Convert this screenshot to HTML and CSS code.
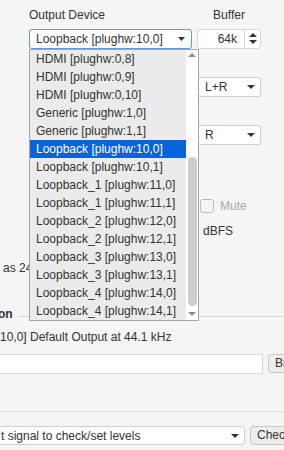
FILE: index.html
```html
<!DOCTYPE html>
<html lang="en">
<head>
  <meta charset="UTF-8">
  <meta name="viewport" content="width=device-width, initial-scale=1.0">
  <title>Output Device</title>
  <link rel="stylesheet" href="styles.css">
</head>
<body>
  <div class="top">
    <div class="field device">
      <label>Output Device</label>
      <div class="select focus">
        <span>Loopback [plughw:10,0]</span>
        <svg class="caret" width="7" height="4" viewBox="0 0 7 4"><path d="M0 0H7L3.5 4Z"/></svg>
      </div>
    </div>
    <div class="field buffer">
      <label>Buffer</label>
      <div class="spin">
        <span class="value">64k</span>
        <span class="arrows">
          <svg width="8" height="4" viewBox="0 0 8 4"><path d="M0 4H8L4 0Z"/></svg>
          <svg width="8" height="4" viewBox="0 0 8 4"><path d="M0 0H8L4 4Z"/></svg>
        </span>
      </div>
    </div>
  </div>

  <div class="side">
    <div class="select small">
      <span>L+R</span>
      <svg class="caret" width="8" height="4" viewBox="0 0 8 4"><path d="M0 0H8L4 4Z"/></svg>
    </div>
    <div class="select small">
      <span>R</span>
      <svg class="caret" width="8" height="4" viewBox="0 0 8 4"><path d="M0 0H8L4 4Z"/></svg>
    </div>
    <div class="mute">
      <span class="check"></span>
      <span>Mute</span>
    </div>
    <div class="unit">dBFS</div>
  </div>

  <div class="note">as 24-bit</div>

  <div class="legend">
    <b>on</b>
    <span class="rule"></span>
  </div>

  <div class="info">10,0] Default Output at 44.1 kHz</div>

  <div class="row">
    <div class="text-input"></div>
    <div class="button">Browse</div>
  </div>

  <div class="divider"></div>

  <div class="row bottom">
    <div class="select wide">
      <span>t signal to check/set levels</span>
      <svg class="caret" width="8" height="4" viewBox="0 0 8 4"><path d="M0 0H8L4 4Z"/></svg>
    </div>
    <div class="button">Check</div>
  </div>

  <div class="listbox">
    <ul class="options">
      <li>HDMI [plughw:0,8]</li>
      <li>HDMI [plughw:0,9]</li>
      <li>HDMI [plughw:0,10]</li>
      <li>Generic [plughw:1,0]</li>
      <li>Generic [plughw:1,1]</li>
      <li class="selected">Loopback [plughw:10,0]</li>
      <li>Loopback [plughw:10,1]</li>
      <li>Loopback_1 [plughw:11,0]</li>
      <li>Loopback_1 [plughw:11,1]</li>
      <li>Loopback_2 [plughw:12,0]</li>
      <li>Loopback_2 [plughw:12,1]</li>
      <li>Loopback_3 [plughw:13,0]</li>
      <li>Loopback_3 [plughw:13,1]</li>
      <li>Loopback_4 [plughw:14,0]</li>
      <li>Loopback_4 [plughw:14,1]</li>
    </ul>
    <div class="scrollbar">
      <svg class="up" width="8" height="4" viewBox="0 0 8 4"><path d="M0 4H8L4 0Z"/></svg>
      <div class="thumb"></div>
      <svg class="down" width="8" height="4" viewBox="0 0 8 4"><path d="M0 0H8L4 4Z"/></svg>
    </div>
  </div>
</body>
</html>
```

FILE: styles.css
```css
body {
  margin: 0;
  width: 284px;
  height: 450px;
  overflow: hidden;
  position: relative;
  background-color: #f5f5f5;
  font-family: "Liberation Sans", Arial, sans-serif;
  font-size: 12px;
  line-height: 16px;
  color: #333;
}
.top {
  display: flex;
  gap: 5px;
  padding: 7px 0 0 29px;
}
.field {
  display: flex;
  flex-direction: column;
  gap: 6px;
}
.buffer label {
  text-align: center;
}
.select {
  box-sizing: border-box;
  height: 20px;
  display: flex;
  align-items: center;
  justify-content: space-between;
  padding: 0 5px 0 6px;
  background-color: white;
  border: 1px solid #cfcfcf;
  border-radius: 3px;
  white-space: nowrap;
}
.select.focus {
  width: 163px;
  border-color: #5b9be0;
  padding-right: 6px;
}
.caret path {
  fill: #333;
}
.spin {
  box-sizing: border-box;
  width: 64px;
  height: 20px;
  display: flex;
  background-color: white;
  border: 1px solid #d6d6d6;
  border-radius: 3px;
}
.spin .value {
  flex: 1;
  text-align: right;
  padding-right: 7px;
  line-height: 18px;
}
.spin .arrows {
  width: 16px;
  border-left: 1px solid #d6d6d6;
  display: flex;
  flex-direction: column;
  align-items: center;
  gap: 3px;
  padding-top: 3px;
  box-sizing: border-box;
}
.spin .arrows path {
  fill: #333;
}
.side {
  margin-left: 198px;
  width: 63px;
}
.select.small {
  margin-top: 28px;
}
.mute {
  display: flex;
  align-items: center;
  gap: 6px;
  height: 14px;
  margin: 54px 0 0 2px;
  color: #aaa;
  line-height: 14px;
}
.check {
  box-sizing: border-box;
  width: 14px;
  height: 14px;
  border: 1px solid #bbb;
  border-radius: 3px;
}
.unit {
  margin-top: 10px;
  padding-left: 5px;
}
.note {
  margin: 21px 0 0 3px;
}
.legend {
  display: flex;
  margin-top: 30px;
}
.legend b {
  margin-left: -2px;
}
.legend .rule {
  flex: 1;
  height: 1px;
  margin: 10px 0 0 6px;
  background-color: #d8d8d8;
}
.info {
  margin-top: 7px;
  white-space: nowrap;
}
.row {
  display: flex;
  gap: 5px;
  margin: 9px 0 0 -10px;
  white-space: nowrap;
}
.text-input {
  box-sizing: border-box;
  width: 273px;
  height: 20px;
  flex: none;
  background-color: white;
  border: 1px solid #d6d6d6;
}
.button {
  box-sizing: border-box;
  height: 19px;
  flex: none;
  padding: 0 6px;
  line-height: 17px;
  background-color: #ededed;
  border: 1px solid #c8c8c8;
  border-radius: 3px;
}
.divider {
  height: 1px;
  margin-top: 37px;
  background-color: #dcdcdc;
}
.row.bottom {
  margin-top: 14px;
}
.select.wide {
  flex: none;
  width: 255px;
  height: 19px;
  padding-left: 10px;
}
.listbox {
  position: absolute;
  top: 49px;
  left: 29px;
  z-index: 2;
  box-sizing: border-box;
  width: 170px;
  height: 272px;
  display: flex;
  background-color: white;
  border: 1px solid #a5a5a5;
}
.options {
  width: 156px;
  margin: 0;
  padding: 0;
  list-style: none;
  background-color: #ebebeb;
}
.options li {
  height: 18px;
  line-height: 18px;
  padding-left: 6px;
  white-space: nowrap;
  overflow: hidden;
}
.options li.selected {
  background-color: #0a63d8;
  color: white;
}
.scrollbar {
  width: 12px;
  display: flex;
  flex-direction: column;
  align-items: center;
}
.scrollbar path {
  fill: #8c8c8c;
}
.scrollbar .up {
  margin-top: 3px;
}
.thumb {
  width: 9px;
  height: 149px;
  margin-top: 100px;
  border-radius: 5px;
  background-color: #cdcdcd;
}
.scrollbar .down {
  margin-top: 6px;
}
```
